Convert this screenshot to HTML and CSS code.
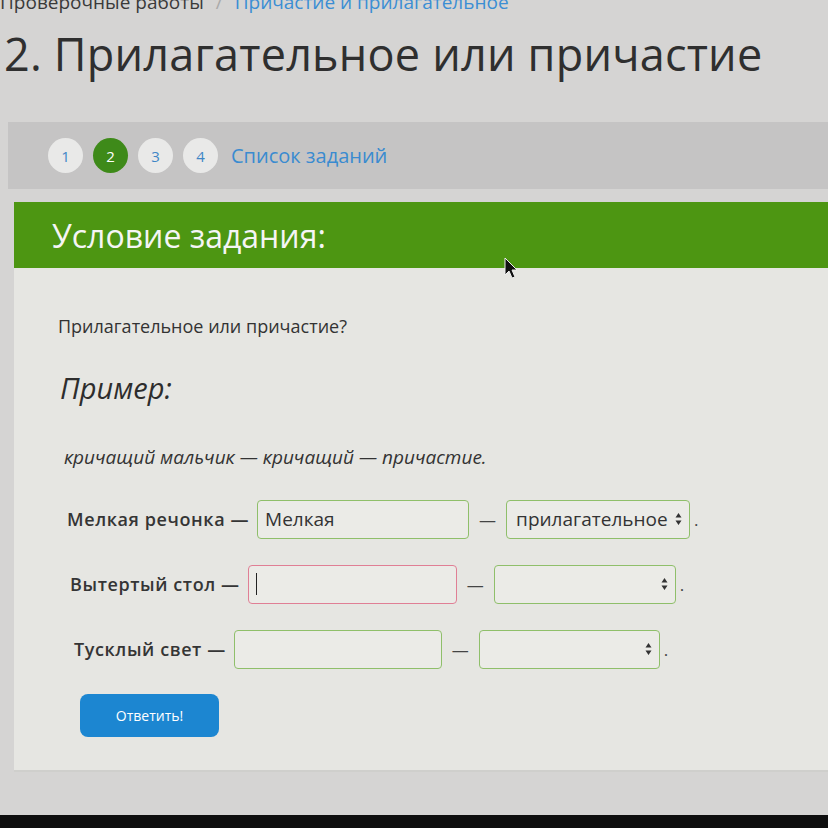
FILE: index.html
```html
<!DOCTYPE html>
<html lang="ru">
<head>
<meta charset="utf-8">
<link rel="stylesheet" href="styles.css">
</head>
<body>
<div class="page">
  <div class="crumbs"><span class="crumb-muted">Проверочные работы</span><span class="crumb-sep">/</span><a class="crumb-link">Причастие и прилагательное</a></div>
  <h1 class="title">2. Прилагательное или причастие</h1>
  <div class="nav">
    <span class="step">1</span>
    <span class="step step-active">2</span>
    <span class="step">3</span>
    <span class="step">4</span>
    <a class="nav-link">Список заданий</a>
  </div>
  <div class="card">
    <div class="card-head">Условие задания:</div>
    <div class="card-body">
      <p class="question">Прилагательное или причастие?</p>
      <p class="example-title">Пример:</p>
      <p class="example">кричащий мальчик — кричащий — причастие.</p>
      <div class="row row-1">
        <span class="label">Мелкая речонка —</span>
        <span class="field field-1">Мелкая</span>
        <span class="dash">—</span>
        <span class="select select-1"><span class="sel-text">прилагательное</span><svg class="arrows" width="7" height="14" viewBox="0 0 7 14"><path d="M3.5 1 L6.5 5.5 L0.5 5.5 Z M3.5 13 L6.5 8.5 L0.5 8.5 Z" fill="#333"/></svg></span>
        <span class="dot">.</span>
      </div>
      <div class="row row-2">
        <span class="label">Вытертый стол —</span>
        <span class="field field-2 field-err"><span class="caret"></span></span>
        <span class="dash">—</span>
        <span class="select select-2"><span class="sel-text"></span><svg class="arrows" width="7" height="14" viewBox="0 0 7 14"><path d="M3.5 1 L6.5 5.5 L0.5 5.5 Z M3.5 13 L6.5 8.5 L0.5 8.5 Z" fill="#333"/></svg></span>
        <span class="dot">.</span>
      </div>
      <div class="row row-3">
        <span class="label">Тусклый свет —</span>
        <span class="field field-3"></span>
        <span class="dash">—</span>
        <span class="select select-3"><span class="sel-text"></span><svg class="arrows" width="7" height="14" viewBox="0 0 7 14"><path d="M3.5 1 L6.5 5.5 L0.5 5.5 Z M3.5 13 L6.5 8.5 L0.5 8.5 Z" fill="#333"/></svg></span>
        <span class="dot">.</span>
      </div>
      <button class="submit">Ответить!</button>
    </div>
  </div>
  <div class="bottom-bar"></div>
</div>
<svg class="cursor" width="16" height="24" viewBox="0 0 16 24"><path d="M1 1 L1 18 L5 14 L8 21 L11 20 L8 13 L13 13 Z" fill="#111" stroke="#eee" stroke-width="1"/></svg>
</body>
</html>
```
FILE: styles.css
```css
* { box-sizing: border-box; }
html, body { margin: 0; padding: 0; }
body {
  width: 828px;
  height: 828px;
  overflow: hidden;
  background: #d5d4d3;
  font-family: "Open Sans", "Noto Sans", sans-serif;
  color: #333;
  position: relative;
}
.page { display: flex; flex-direction: column; height: 828px; }
.crumbs {
  margin-top: -11px;
  font-size: 19px;
  line-height: 26px;
  height: 26px;
  display: flex;
  gap: 12px;
  white-space: nowrap;
}
.crumb-muted { color: #3a3a3a; }
.crumb-sep { color: #aaa; }
.crumb-link { color: #3b8ed4; }
.title {
  margin: 11px 0 0 4px;
  font-weight: 400;
  font-size: 45px;
  line-height: 56px;
  color: #2f2f2f;
  letter-spacing: 0.2px;
}
.nav {
  margin: 40px 0 0 8px;
  height: 67px;
  background: #c5c4c4;
  display: flex;
  align-items: center;
  padding-left: 40px;
  gap: 10px;
}
.step {
  width: 35px;
  height: 35px;
  border-radius: 50%;
  background: #e9e9e8;
  color: #3f86c6;
  font-size: 15px;
  display: flex;
  align-items: center;
  justify-content: center;
}
.step-active { background: #3e8a19; color: #fff; }
.nav-link { margin-left: 3px; color: #3a8bd0; font-size: 20px; }
.card { margin: 13px 0 0 14px; display: flex; flex-direction: column; }
.card-head {
  height: 66px;
  background: #4d9612;
  color: #f5f5f5;
  font-size: 32px;
  display: flex;
  align-items: center;
  padding-left: 38px;
}
.card-body {
  background: #e6e6e2;
  height: 504px;
  padding: 36px 0 0 44px;
  border-bottom: 2px solid #cfcfcc;
  display: flex;
  flex-direction: column;
  align-items: flex-start;
}
.question { margin: 10px 0 0 0; font-size: 18px; color: #333; }
.example-title { margin: 30px 0 0 2px; font-size: 29px; font-style: italic; color: #2d2d2d; }
.example { margin: 37px 0 0 6px; font-size: 19px; font-style: italic; color: #333; }
.row {
  display: flex;
  align-items: center;
  height: 40px;
}
.row-1 { margin: 29px 0 0 9px; }
.row-2 { margin: 25px 0 0 12px; }
.row-3 { margin: 25px 0 0 16px; }
.label { font-size: 18px; font-weight: 600; color: #353535; margin-right: 8px; letter-spacing: 0.6px; }
.field {
  height: 39px;
  border: 1.5px solid #8fbf6a;
  border-radius: 4px;
  background: #ebebe7;
  font-size: 19px;
  padding-left: 7px;
  display: flex;
  align-items: center;
  color: #333;
}
.field-1 { width: 212px; }
.field-2 { width: 209px; }
.field-3 { width: 208px; }
.field-err { border-color: #e07f95; }
.caret { width: 1.5px; height: 22px; background: #222; }
.dash { width: 37px; text-align: center; font-size: 17px; color: #444; }
.select {
  height: 39px;
  border: 1.5px solid #8fbf6a;
  border-radius: 4px;
  background: #ebebe7;
  display: flex;
  align-items: center;
  justify-content: space-between;
  padding: 0 7px 0 9px;
  font-size: 19px;
  color: #333;
}
.select-1 { width: 184px; }
.select-2 { width: 182px; }
.select-3 { width: 181px; }
.arrows { flex: none; }
.dot { margin-left: 4px; font-size: 17px; color: #444; }
.submit {
  margin: 25px 0 0 22px;
  width: 139px;
  height: 43px;
  border: none;
  border-radius: 8px;
  background: #1c86d1;
  color: #fff;
  font-family: "Open Sans", "Noto Sans", sans-serif;
  font-size: 14px;
}
.bottom-bar { margin-top: auto; height: 13px; background: #0e0e0e; }
.cursor { position: absolute; left: 504px; top: 257px; }
```
